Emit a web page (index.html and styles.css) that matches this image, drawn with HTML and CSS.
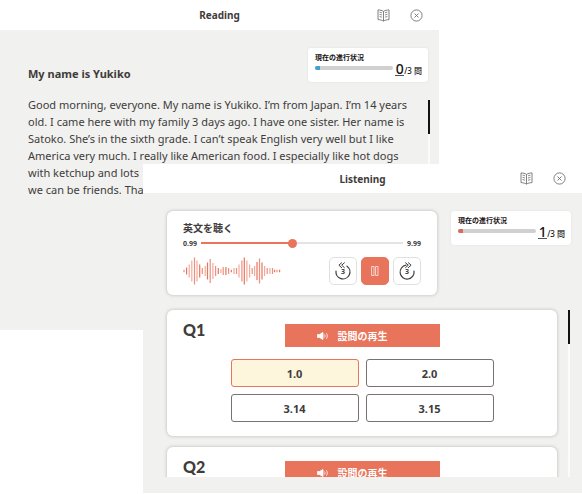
FILE: index.html
```html
<!DOCTYPE html>
<html lang="ja">
<head>
    <meta charset="UTF-8">
    <meta name="viewport" content="width=device-width, initial-scale=1.0">
    <title>Reading / Listening</title>
    <link rel="stylesheet" href="styles.css">
</head>
<body>
    <!-- 共通アイコン -->
    <svg class="symbols" aria-hidden="true">
        <symbol id="icon-book" viewBox="0 0 13 13">
            <path d="M6.500 2.400C5 1.400 3.200 1 1 .9v9.700c2.200.1 4 .5 5.500 1.500 1.500-1 3.300-1.400 5.500-1.500V.9c-2.200.1-4 .5-5.500 1.500zM6.500 2.400v9.700"/>
            <path d="M2.600 3.200c.9.1 1.600.300 2.300.6M2.600 5.400c.9.1 1.600.300 2.300.6M2.600 7.600c.9.1 1.600.300 2.300.6M10.400 3.200c-.9.1-1.600.300-2.300.6M10.400 5.400c-.9.1-1.600.300-2.300.6M10.400 7.600c-.9.1-1.600.300-2.300.6"/>
        </symbol>
        <symbol id="icon-close" viewBox="0 0 13 13">
            <circle cx="6.500" cy="6.500" r="5.600"/>
            <path d="M4.500 4.500l4 4M8.500 4.500l-4 4"/>
        </symbol>
        <symbol id="icon-speaker" viewBox="0 0 12 8">
            <path class="solid" d="M.5 2.500h2L6 .5v7l-3.500-2h-2z"/>
            <path d="M7.500 2.500c.7.900.7 2.100 0 3M9.300 1.200c1.400 1.700 1.400 3.900 0 5.600"/>
        </symbol>
    </svg>

    <div class="desktop">
        <!-- Reading -->
        <section class="window reading">
            <header class="bar">
                <h1 class="bar-title">Reading</h1>
                <div class="bar-tools">
                    <button class="icon-button" type="button" aria-label="辞書"><svg class="book"><use href="#icon-book"/></svg></button>
                    <button class="icon-button" type="button" aria-label="閉じる"><svg class="close"><use href="#icon-close"/></svg></button>
                </div>
            </header>
            <div class="panel">
                <div class="top-row">
                    <h2 class="story-title">My name is Yukiko</h2>
                    <div class="status">
                        <label class="status-label" for="reading-progress">現在の進行状況</label>
                        <div class="status-row">
                            <progress class="meter blue" id="reading-progress" value="7" max="100"></progress>
                            <span class="count"><b class="now">0</b>/3 問</span>
                        </div>
                    </div>
                </div>
                <div class="scroll-area">
                    <p class="story">Good morning, everyone. My name is Yukiko. I’m from Japan. I’m 14 years<br>
                        old. I came here with my family 3 days ago. I have one sister. Her name is<br>
                        Satoko. She’s in the sixth grade. I can’t speak English very well but I like<br>
                        America very much. I really like American food. I especially like hot dogs<br>
                        with ketchup and lots<br>
                        we can be friends. Thank</p>
                    <div class="scrollbar"><div class="scroll-thumb"></div></div>
                </div>
            </div>
        </section>

        <!-- Listening -->
        <section class="window listening">
            <header class="bar">
                <h1 class="bar-title">Listening</h1>
                <div class="bar-tools">
                    <button class="icon-button" type="button" aria-label="辞書"><svg class="book"><use href="#icon-book"/></svg></button>
                    <button class="icon-button" type="button" aria-label="閉じる"><svg class="close"><use href="#icon-close"/></svg></button>
                </div>
            </header>
            <div class="panel">
                <div class="top-row">
                    <div class="player card">
                        <label class="player-title" for="seek">英文を聴く</label>
                        <div class="seek-row">
                            <span class="time">0.99</span>
                            <input class="seek" id="seek" type="range" min="0" max="100" value="45">
                            <span class="time">9.99</span>
                        </div>
                        <div class="control-row">
                            <svg class="wave" viewBox="0 0 98 28" aria-hidden="true">
                                <path class="light" d="M6.200 7.500v13M8.800 3.500v21M14 3.500v21M22.200 9v10M29.900 6v16M37.900 12v4M51 11v6M56 7.500v13M63.900 3.500v21M66.600 7.500v13M71.600 9v10M81.600 9v10M86.900 11v6"/>
                                <path class="middle" d="M1 12.800v2.400M11.500 .5v27M19.300 11v6M27.200 2v24M32.600 9v10M40.200 10v8M45.600 11v6M53.500 11v6M58.900 3.500v21M69.200 11v6M76.500 1.500v25M84.200 11v6M89.500 11v6M94 12.800v2.400"/>
                                <path class="dark" d="M3.600 10.500v7M16.700 7.500v13M24.500 5.500v17M35.300 11v6M42.900 10v8M48.300 12.800v2.400M61.300 .5v27M74 5v18M79 5.500v17M91.600 12.800v2.400M96.600 12.800v2.400"/>
                            </svg>
                            <button class="control" type="button" aria-label="3秒戻る">
                                <svg class="skip" viewBox="0 0 20 20">
                                    <path d="M14 5.200A7 7 0 1 1 3 10"/>
                                    <path class="thin" d="M8.600 1.800L5.900 4.200l2.700 2.400M11.400 1.800L8.700 4.200l2.700 2.400"/>
                                    <text x="10" y="13">3</text>
                                </svg>
                            </button>
                            <button class="control pause" type="button" aria-label="一時停止">
                                <svg class="skip" viewBox="0 0 20 20"><path d="M7 5.500h2v9H7zM11 5.500h2v9h-2z"/></svg>
                            </button>
                            <button class="control" type="button" aria-label="3秒進む">
                                <svg class="skip" viewBox="0 0 20 20">
                                    <path d="M9 4.200A7 7 0 1 0 17 10"/>
                                    <path class="thin" d="M11.400 1.800l2.700 2.400-2.700 2.400M8.600 1.800l2.700 2.400-2.700 2.400"/>
                                    <text x="10" y="13">3</text>
                                </svg>
                            </button>
                        </div>
                    </div>
                    <div class="status">
                        <label class="status-label" for="listening-progress">現在の進行状況</label>
                        <div class="status-row">
                            <progress class="meter red" id="listening-progress" value="7" max="100"></progress>
                            <span class="count"><b class="now">1</b>/3 問</span>
                        </div>
                    </div>
                </div>
                <div class="scroll-area">
                    <div class="questions">
                        <article class="question card">
                            <h2 class="number">Q1</h2>
                            <button class="play" type="button"><svg class="speaker"><use href="#icon-speaker"/></svg>設問の再生</button>
                            <div class="answers">
                                <button class="answer selected" type="button">1.0</button>
                                <button class="answer" type="button">2.0</button>
                                <button class="answer" type="button">3.14</button>
                                <button class="answer" type="button">3.15</button>
                            </div>
                        </article>
                        <article class="question card">
                            <h2 class="number">Q2</h2>
                            <button class="play" type="button"><svg class="speaker"><use href="#icon-speaker"/></svg>設問の再生</button>
                        </article>
                    </div>
                    <div class="scrollbar"><div class="scroll-thumb"></div></div>
                </div>
            </div>
        </section>
    </div>
</body>
</html>
```
FILE: styles.css
```css
* {
    box-sizing: border-box;
}
body {
    margin: 0;
    background-color: white;
    color: #403c3b;
    font-family: "Noto Sans", "Noto Sans CJK JP", sans-serif;
    font-size: 11px;
}
h1, h2, p {
    margin: 0;
}
button {
    padding: 0;
    border: none;
    background: none;
    color: inherit;
    font-family: inherit;
    cursor: pointer;
}
.symbols {
    display: none;
}

/* 2つのウィンドウを斜めに重ねる */
.desktop {
    display: grid;
    grid-template-columns: 143px 1fr 143px;
    grid-template-rows: 164px 166px 163px;
}
.window {
    display: flex;
    flex-direction: column;
    min-width: 0;
    min-height: 0;
    background-color: #f1f1ef;
}
.reading {
    grid-column: 1 / 3;
    grid-row: 1 / 3;
}
.listening {
    grid-column: 2 / 4;
    grid-row: 2 / 4;
}

/* ヘッダー */
.bar {
    display: grid;
    grid-template-columns: 1fr auto 1fr;
    align-items: center;
    height: 29px;
    padding: 0 16px;
    flex: none;
    background-color: white;
}
.reading .bar {
    height: 30px;
}
.bar-title {
    grid-column: 2;
    font-size: 10px;
    line-height: 16px;
}
.bar-tools {
    display: flex;
    justify-content: flex-end;
    gap: 20px;
}
.icon-button {
    display: flex;
    align-items: center;
}
.book, .close {
    width: 13px;
    height: 13px;
    fill: none;
    stroke: #77716f;
    stroke-width: 0.9;
}

/* 本体 */
.panel {
    display: flex;
    flex-direction: column;
    flex: 1;
    min-height: 0;
    padding: 18px 11px 16px 16px;
}
.top-row {
    display: flex;
    align-items: flex-start;
    gap: 14px;
}
.scroll-area {
    display: flex;
    flex: 1;
    min-height: 0;
}
.scrollbar {
    width: 2px;
    flex: none;
    background-color: #fbfbfa;
}
.scroll-thumb {
    height: 34px;
    background-color: #151112;
}
.card {
    border-radius: 6px;
    background-color: white;
    box-shadow: 0 0 3px 1px #cfcfcf;
}

/* 進行状況 */
.status {
    width: 120px;
    height: 34px;
    padding: 5px 6px 0 7px;
    flex: none;
    border-radius: 3px;
    background-color: white;
    box-shadow: 0 0 2px #dcdcdc;
}
.status-label {
    display: block;
    color: #151112;
    font-size: 7px;
    font-weight: bold;
    line-height: 10px;
}
.status-row {
    display: flex;
    gap: 2px;
}
.meter {
    appearance: none;
    flex: 1;
    min-width: 0;
    height: 4px;
    margin-top: 3px;
    border: none;
    border-radius: 2px;
    overflow: hidden;
    background-color: #d0d0d0;
}
.meter::-webkit-progress-bar {
    background-color: #d0d0d0;
}
.blue::-webkit-progress-value {
    background-color: #459fce;
}
.red::-webkit-progress-value {
    background-color: #dc6a58;
}
.count {
    color: #151112;
    font-size: 8px;
    font-weight: 500;
    line-height: 12px;
    white-space: nowrap;
}
.now {
    display: inline-block;
    width: 9px;
    border-bottom: 1px solid #55504f;
    font-size: 14px;
    font-weight: 500;
    text-align: center;
}

/* Reading */
.reading .panel {
    padding-left: 28px;
    padding-right: 9px;
}
.reading .top-row {
    justify-content: space-between;
    padding-right: 2px;
    margin-bottom: 18px;
}
.story-title {
    margin-top: 18px;
    font-size: 11px;
    line-height: 16px;
}
.story {
    flex: 1;
    min-width: 0;
    margin-top: -4px;
    line-height: 17px;
    white-space: nowrap;
}

/* 音声プレーヤー */
.player {
    flex: 1;
    min-width: 0;
    height: 84px;
    margin-left: 8px;
    padding: 10px 16px 0;
}
.player-title {
    display: block;
    font-size: 10px;
    font-weight: bold;
    line-height: 14px;
}
.seek-row {
    display: flex;
    align-items: center;
    gap: 4px;
    height: 16px;
}
.time {
    font-size: 7px;
    font-weight: bold;
}
.seek {
    appearance: none;
    flex: 1;
    min-width: 0;
    height: 10px;
    margin: 0;
    background: linear-gradient(to right, #e9745c 45%, #e4e4e4 45%) center / 100% 2px no-repeat;
}
.seek::-webkit-slider-thumb {
    appearance: none;
    width: 9px;
    height: 9px;
    border-radius: 50%;
    background-color: #e9745c;
}
.control-row {
    display: flex;
    gap: 4px;
    margin-top: 6px;
}
.wave {
    width: 98px;
    height: 28px;
    margin-right: auto;
}
.wave path {
    stroke: #e9745c;
    stroke-width: 1.2;
}
.wave .light {
    opacity: 0.6;
}
.wave .middle {
    opacity: 0.8;
}
.control {
    display: flex;
    align-items: center;
    justify-content: center;
    width: 28px;
    height: 28px;
    border: 1px solid #e0e0e0;
    border-radius: 5px;
}
.skip {
    width: 20px;
    height: 20px;
    fill: none;
    stroke: #403c3b;
    stroke-width: 1.2;
    stroke-linecap: round;
}
.skip .thin {
    stroke-width: 1;
}
.skip text {
    fill: #403c3b;
    stroke: none;
    font-size: 7px;
    font-weight: bold;
    text-anchor: middle;
}
.pause {
    border-color: #e9745c;
    background-color: #e9745c;
}
.pause .skip {
    stroke: white;
    stroke-width: 0.7;
}

/* 設問 */
.listening .scroll-area {
    margin-top: 9px;
}
.listening .scrollbar {
    margin-top: 6px;
    margin-right: 1px;
}
.questions {
    display: flex;
    flex-direction: column;
    gap: 11px;
    flex: 1;
    min-width: 0;
    padding: 6px 11px 0 8px;
    overflow: hidden;
}
.question {
    display: grid;
    grid-template-columns: 1fr auto 1fr;
    row-gap: 12px;
    flex: none;
    padding: 14px 16px;
}
.number {
    font-family: Lato, sans-serif;
    font-size: 16px;
    font-weight: 900;
    line-height: 12px;
}
.play {
    display: flex;
    align-items: center;
    justify-content: center;
    gap: 9px;
    width: 155px;
    height: 23px;
    padding-right: 20px;
    background-color: #e9745c;
    color: white;
    font-size: 10px;
    font-weight: bold;
}
.speaker {
    width: 12px;
    height: 8px;
    fill: none;
    stroke: white;
    stroke-width: 0.8;
}
.solid {
    fill: white;
}
.answers {
    display: grid;
    grid-column: 1 / 4;
    grid-template-columns: 128px 128px;
    gap: 7px;
    justify-content: center;
}
.answer {
    height: 28px;
    border: 1px solid #787273;
    border-radius: 3px;
    font-size: 11px;
    font-weight: bold;
}
.selected {
    border-color: #e9745c;
    background-color: #fdf5dc;
}
```
